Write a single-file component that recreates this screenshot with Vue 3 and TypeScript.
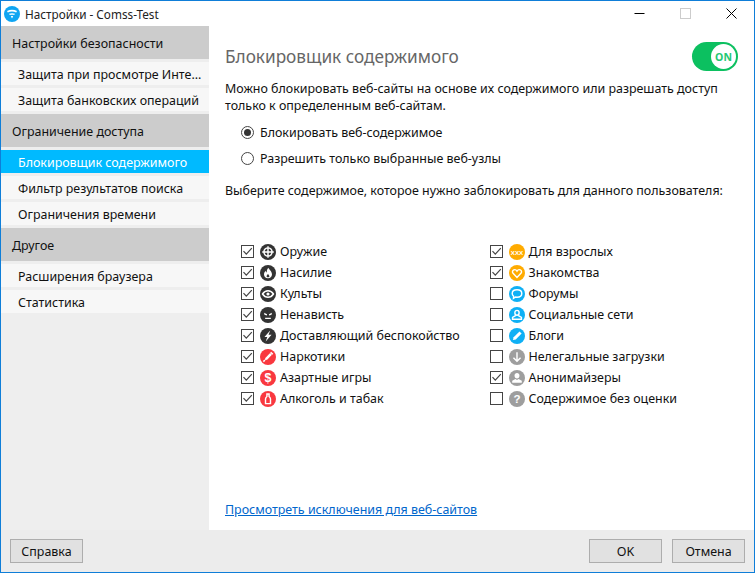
<script setup lang="ts">
interface Ic { bg: string; fill?: string; stroke?: string; text?: string; size?: number }
interface Cat { label: string; on: boolean; ic: Ic }
const DARK = '#333333', RED = '#f9383f', ORANGE = '#ffab00', BLUE = '#0fb0f5', GREY = '#9e9e9e'
const left: Cat[] = [
  { label: 'Оружие', on: true, ic: { bg: DARK, stroke: 'M9 2.5V15.5M2.5 9H15.5M13.6 9A4.6 4.6 0 1 1 4.4 9A4.6 4.6 0 1 1 13.6 9Z' } },
  { label: 'Насилие', on: true, ic: { bg: DARK, fill: 'M9.5 3C10 5 13.5 6.8 13.5 10.5C13.5 13.2 11.4 15 9 15C6.6 15 4.5 13.2 4.5 10.6C4.5 8.8 5.5 7.4 6.4 6.5C6.5 7.6 7 8.2 7.6 8.4C7.4 6.4 8 4.4 9.5 3ZM9 10C8.2 11 7.4 11.6 7.4 12.6C7.4 13.4 8.1 13.9 9 13.9C9.9 13.9 10.6 13.4 10.6 12.6C10.6 11.6 9.6 11 9 10Z' } },
  { label: 'Культы', on: true, ic: { bg: DARK, fill: 'M9 7.2A1.8 1.8 0 1 1 9 10.8A1.8 1.8 0 1 1 9 7.2Z', stroke: 'M2.8 9C4.4 6.6 6.6 5.4 9 5.4C11.4 5.4 13.6 6.6 15.2 9C13.6 11.4 11.4 12.6 9 12.6C6.6 12.6 4.4 11.4 2.8 9Z' } },
  { label: 'Ненависть', on: true, ic: { bg: DARK, fill: 'M4.6 6.6L8 8.2L7.6 9.6L5 8.6ZM13.4 6.6L10 8.2L10.4 9.6L13 8.6ZM5.8 12H12.2V13.4H5.8Z' } },
  { label: 'Доставляющий беспокойство', on: true, ic: { bg: DARK, fill: 'M11.5 2.8L5 10.2H8.2L6.4 15.2L13 7.6H9.6Z' } },
  { label: 'Наркотики', on: true, ic: { bg: RED, fill: 'M11.4 4.6L13.4 6.6L8 12L5.6 12.4L6 10Z', stroke: 'M12 3.6L14.4 6M5.6 12.4L3.8 14.2' } },
  { label: 'Азартные игры', on: true, ic: { bg: RED, text: '$', size: 14 } },
  { label: 'Алкоголь и табак', on: true, ic: { bg: RED, stroke: 'M7.8 3.4H10.2V6.2C11.2 7 11.8 7.8 11.8 9V14.2H6.2V9C6.2 7.8 6.8 7 7.8 6.2Z' } },
]
const right: Cat[] = [
  { label: 'Для взрослых', on: true, ic: { bg: ORANGE, text: 'XXX', size: 7 } },
  { label: 'Знакомства', on: true, ic: { bg: ORANGE, stroke: 'M9 14L4.6 9.4C3.4 8 3.8 6 5.4 5.4C6.8 4.9 8.2 5.5 9 6.8C9.8 5.5 11.2 4.9 12.6 5.4C14.2 6 14.6 8 13.4 9.4Z' } },
  { label: 'Форумы', on: false, ic: { bg: BLUE, stroke: 'M9 4.2C12.2 4.2 14.4 6 14.4 8.4C14.4 10.8 12.2 12.6 9 12.6C8.4 12.6 8 12.6 7.4 12.4L5 14L5.2 11.6C4.2 10.8 3.6 9.7 3.6 8.4C3.6 6 5.8 4.2 9 4.2Z' } },
  { label: 'Социальные сети', on: false, ic: { bg: BLUE, stroke: 'M9 3.8C10.4 3.8 11.4 4.9 11.4 6.4C11.4 7.9 10.4 9.2 9 9.2C7.6 9.2 6.6 7.9 6.6 6.4C6.6 4.9 7.6 3.8 9 3.8ZM7.4 9.6L4 11.6V13.8H14V11.6L10.6 9.6' } },
  { label: 'Блоги', on: false, ic: { bg: BLUE, fill: 'M11.8 3.8L14.2 6.2L7.6 12.8L4.4 13.6L5.2 10.4Z' } },
  { label: 'Нелегальные загрузки', on: false, ic: { bg: GREY, stroke: 'M9 3.6V13.6M5 9.8L9 13.8L13 9.8' } },
  { label: 'Анонимайзеры', on: true, ic: { bg: GREY, fill: 'M9 3.4C10.6 3.4 11.8 4.7 11.8 6.4C11.8 8.1 10.6 9.6 9 9.6C7.4 9.6 6.2 8.1 6.2 6.4C6.2 4.7 7.4 3.4 9 3.4ZM7.2 10L3.6 12V14.4H14.4V12L10.8 10L9 11.2Z' } },
  { label: 'Содержимое без оценки', on: false, ic: { bg: GREY, text: '?', size: 13 } },
]
const groups = [
  { title: 'Настройки безопасности', items: ['Защита при просмотре Инте...', 'Защита банковских операций'] },
  { title: 'Ограничение доступа', items: ['Блокировщик содержимого', 'Фильтр результатов поиска', 'Ограничения времени'] },
  { title: 'Другое', items: ['Расширения браузера', 'Статистика'] },
]
const columns = [left, right]
</script>

<template>
  <div class="window">
    <header class="titlebar">
      <svg class="logo" width="16" height="16" viewBox="0 0 16 16">
        <circle cx="8" cy="8" r="8" fill="#0fa5f2" />
        <path d="M3 5C6 3.4 10 3.4 13 5L12.2 6.4C9.6 5.2 6.4 5.2 3.8 6.4ZM5 7.7C7 7 9 7 11 7.7L10.2 9.1C8.8 8.6 7.2 8.6 5.8 9.1ZM6.8 10.2C7.6 10 8.4 10 9.2 10.2L8 12.6Z" fill="#fff" />
      </svg>
      <span class="title">Настройки - Comss-Test</span>
      <div class="controls">
        <span class="ctl"><svg width="11" height="11" viewBox="0 0 11 11"><path d="M0.5 5.5H10.5" stroke="#000" /></svg></span>
        <span class="ctl"><svg width="11" height="11" viewBox="0 0 11 11"><rect x="0.5" y="0.5" width="10" height="10" fill="none" stroke="#ccc" /></svg></span>
        <span class="ctl"><svg width="11" height="11" viewBox="0 0 11 11"><path d="M0.5 0.5L10.5 10.5M10.5 0.5L0.5 10.5" stroke="#000" /></svg></span>
      </div>
    </header>

    <div class="body">
      <nav class="sidebar">
        <template v-for="g in groups" :key="g.title">
          <div class="group">{{ g.title }}</div>
          <div
            v-for="it in g.items"
            :key="it"
            class="item"
            :class="{ active: it === 'Блокировщик содержимого' }"
          >{{ it }}</div>
        </template>
      </nav>

      <main class="content">
        <div class="heading">
          <h1>Блокировщик содержимого</h1>
          <div class="toggle"><span class="knob">ON</span></div>
        </div>
        <p class="intro">Можно блокировать веб-сайты на основе их содержимого или разрешать доступ только к определенным веб-сайтам.</p>
        <div class="radios">
          <label class="radio"><span class="rb on"></span>Блокировать веб-содержимое</label>
          <label class="radio"><span class="rb"></span>Разрешить только выбранные веб-узлы</label>
        </div>
        <p class="choose">Выберите содержимое, которое нужно заблокировать для данного пользователя:</p>
        <div class="cats">
          <ul v-for="(col, i) in columns" :key="i" class="col">
            <li v-for="c in col" :key="c.label" class="cat">
              <span class="cb">
                <svg v-if="c.on" width="11" height="11" viewBox="0 0 11 11"><path d="M1.5 5.2L4.3 8.2L9.8 2.2" fill="none" stroke="#444" stroke-width="1.2" /></svg>
              </span>
              <svg class="ic" width="16" height="16" viewBox="0 0 18 18">
                <circle cx="9" cy="9" r="9" :fill="c.ic.bg" />
                <path v-if="c.ic.stroke" :d="c.ic.stroke" fill="none" stroke="#fff" stroke-width="1.6" />
                <path v-if="c.ic.fill" :d="c.ic.fill" fill="#fff" />
                <text
                  v-if="c.ic.text"
                  x="9"
                  y="9"
                  text-anchor="middle"
                  dominant-baseline="central"
                  fill="#fff"
                  font-weight="700"
                  font-family="'Liberation Sans', sans-serif"
                  :font-size="c.ic.size"
                >{{ c.ic.text }}</text>
              </svg>
              <span>{{ c.label }}</span>
            </li>
          </ul>
        </div>
        <a class="link" href="#">Просмотреть исключения для веб-сайтов</a>
      </main>
    </div>

    <footer class="footer">
      <button class="btn">Справка</button>
      <span class="spacer"></span>
      <button class="btn">OK</button>
      <button class="btn">Отмена</button>
    </footer>
  </div>
</template>

<style>
html, body { margin: 0; background: #fff; }
</style>

<style scoped>
.window {
  width: 755px;
  height: 573px;
  box-sizing: border-box;
  border: 1px solid #0f7ed8;
  display: flex;
  flex-direction: column;
  overflow: hidden;
  background: #fff;
  color: #111;
  font-family: "Noto Sans", sans-serif;
  font-size: 12.45px;
}
.titlebar {
  height: 25px;
  flex: none;
  display: flex;
  align-items: center;
  padding-left: 3px;
}
.logo { margin-right: 5px; }
.title { font-size: 11.75px; color: #222; }
.controls { margin-left: auto; display: flex; }
.ctl {
  width: 46px;
  display: flex;
  justify-content: center;
  align-items: center;
}
.body { flex: 1; display: flex; min-height: 0; }
.sidebar {
  width: 208px;
  flex: none;
  background: #eeeeee;
}
.group {
  height: 33px;
  line-height: 35px;
  background: #cccccc;
  padding-left: 11px;
  margin-bottom: 3px;
}
.item {
  height: 23px;
  line-height: 25px;
  background: #f7f7f7;
  padding-left: 17px;
  margin-bottom: 3px;
  white-space: nowrap;
  overflow: hidden;
}
.active { background: #00baff; color: #fff; }
.content {
  flex: 1;
  display: flex;
  flex-direction: column;
  padding: 16px 16px 0;
  min-width: 0;
}
.heading {
  display: flex;
  align-items: center;
  justify-content: space-between;
  height: 29px;
}
h1 { margin: 0; font-size: 17.2px; font-weight: 400; color: #666; }
.toggle {
  width: 46px;
  height: 29px;
  border-radius: 15px;
  background: #0cc060;
  display: flex;
  align-items: center;
  justify-content: flex-end;
  padding-right: 2px;
  box-sizing: border-box;
}
.knob {
  width: 25px;
  height: 25px;
  border-radius: 50%;
  background: #fff;
  color: #23c873;
  font-size: 10.5px;
  font-weight: 700;
  display: flex;
  align-items: center;
  justify-content: center;
}
.intro { margin: 9px 0 0; line-height: 17px; width: 520px; }
.radios { margin: 9px 0 0 16px; display: flex; flex-direction: column; gap: 8px; }
.radio { display: flex; align-items: center; height: 18px; }
.rb {
  width: 13px;
  height: 13px;
  box-sizing: border-box;
  border: 1px solid #444;
  border-radius: 50%;
  margin-right: 6px;
  display: flex;
  align-items: center;
  justify-content: center;
}
.rb.on::after { content: ""; width: 7px; height: 7px; border-radius: 50%; background: #333; }
.choose { margin: 15px 0 0; line-height: 18px; }
.cats { margin: 41px 0 0 16px; display: flex; }
.col { list-style: none; margin: 0; padding: 0; width: 249px; }
.cat { height: 21px; display: flex; align-items: center; }
.cb {
  width: 13px;
  height: 13px;
  box-sizing: border-box;
  border: 1px solid #444;
  margin-right: 6px;
  display: flex;
  align-items: center;
  justify-content: center;
  flex: none;
}
.ic { margin-right: 4px; flex: none; }
.link { margin-top: auto; margin-bottom: 11px; color: #0066cc; line-height: 18px; }
.footer {
  height: 42px;
  flex: none;
  background: #ececec;
  display: flex;
  align-items: flex-start;
  padding: 9px 9px 0;
  box-sizing: border-box;
  gap: 10px;
}
.spacer { flex: 1; }
.btn {
  width: 73px;
  height: 24px;
  box-sizing: border-box;
  background: #e1e1e1;
  border: 1px solid #adadad;
  font: inherit;
  color: #111;
  padding: 0;
}
</style>
